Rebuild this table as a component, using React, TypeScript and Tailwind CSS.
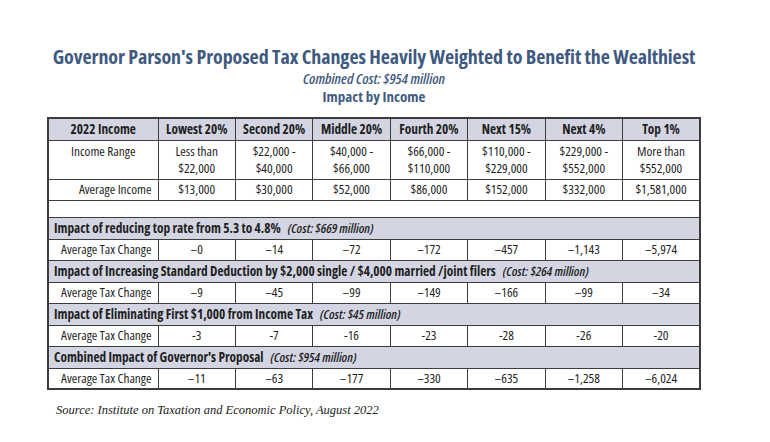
const cols = ["Lowest 20%", "Second 20%", "Middle 20%", "Fourth 20%", "Next 15%", "Next 4%", "Top 1%"];

const ranges = [
  ["Less than", "$22,000"],
  ["$22,000 -", "$40,000"],
  ["$40,000 -", "$66,000"],
  ["$66,000 -", "$110,000"],
  ["$110,000 -", "$229,000"],
  ["$229,000 -", "$552,000"],
  ["More than", "$552,000"],
];

const avgIncome = ["$13,000", "$30,000", "$52,000", "$86,000", "$152,000", "$332,000", "$1,581,000"];

const sections = [
  { title: "Impact of reducing top rate from 5.3 to 4.8%", cost: "(Cost: $669 million)", values: ["\u20130", "\u201314", "\u201372", "\u2013172", "\u2013457", "\u20131,143", "\u20135,974"] },
  { title: "Impact of Increasing Standard Deduction by $2,000 single / $4,000 married /joint filers", cost: "(Cost: $264 million)", values: ["\u20139", "\u201345", "\u201399", "\u2013149", "\u2013166", "\u201399", "\u201334"] },
  { title: "Impact of Eliminating First $1,000 from Income Tax", cost: "(Cost: $45 million)", values: ["-3", "-7", "-16", "-23", "-28", "-26", "-20"] },
  { title: "Combined Impact of Governor's Proposal", cost: "(Cost: $954 million)", values: ["\u201311", "\u201363", "\u2013177", "\u2013330", "\u2013635", "\u20131,258", "\u20136,024"] },
];

const cell = "border border-[#3c3c3c] p-0 text-center align-middle";

export default function App() {
  return (
    <div className="h-[442px] w-[770px] bg-white font-['Open_Sans',sans-serif] text-[#1f1f1f] [font-stretch:75%]">
      <div className="w-[701px] pl-[47px] pt-[44px]">
        <h1 className="-mx-4 whitespace-nowrap text-center text-[20px] font-bold leading-[26px] tracking-[-0.1px] text-[#3f5a80]">
          Governor Parson's Proposed Tax Changes Heavily Weighted to Benefit the Wealthiest
        </h1>
        <p className="text-center text-[15px] font-semibold italic leading-[17px] text-[#3f5a80]">Combined Cost: $954 million</p>
        <p className="text-center text-[15px] font-bold leading-[19px] text-[#3f5a80]">Impact by Income</p>

        <table className="mt-[11px] w-[654px] table-fixed border-collapse border-2 border-[#3c3c3c] text-[13.3px] leading-[17px]">
          <colgroup>
            <col className="w-[110px]" />
            {cols.map((c) => (
              <col key={c} />
            ))}
          </colgroup>
          <tbody>
            <tr className="h-[22px] bg-[#d3d5e2] font-bold">
              <td className={cell}>2022 Income</td>
              {cols.map((c) => (
                <td key={c} className={cell}>{c}</td>
              ))}
            </tr>
            <tr className="h-[39px]">
              <td className={`${cell} !align-top pt-[2px]`}>Income Range</td>
              {ranges.map((r) => (
                <td key={r[1] + r[0]} className={cell}>
                  {r[0]}
                  <br />
                  {r[1]}
                </td>
              ))}
            </tr>
            <tr className="h-[21px]">
              <td className={`${cell} !text-right pr-[6px]`}>Average Income</td>
              {avgIncome.map((v) => (
                <td key={v} className={cell}>{v}</td>
              ))}
            </tr>
            <tr className="h-[17px]">
              <td colSpan={8} className="border border-[#3c3c3c] p-0" />
            </tr>
            {sections.map((s) => (
              <SectionRows key={s.title} {...s} />
            ))}
          </tbody>
        </table>

        <p className="mt-[11px] pl-[9px] font-['Liberation_Serif',serif] text-[12.5px] italic text-[#222] [font-stretch:100%]">
          Source: Institute on Taxation and Economic Policy, August 2022
        </p>
      </div>
    </div>
  );
}

function SectionRows({ title, cost, values }: { title: string; cost: string; values: string[] }) {
  return (
    <>
      <tr className="h-[22px] bg-[#d3d5e2]">
        <td colSpan={8} className="border border-[#3c3c3c] p-0 pl-[5px] text-left font-bold">
          {title}
          <span className="ml-[7px] font-semibold italic">{cost}</span>
        </td>
      </tr>
      <tr className="h-[21px]">
        <td className={`${cell} !text-right pr-[6px]`}>Average Tax Change</td>
        {values.map((v, i) => (
          <td key={i} className={cell}>{v}</td>
        ))}
      </tr>
    </>
  );
}
